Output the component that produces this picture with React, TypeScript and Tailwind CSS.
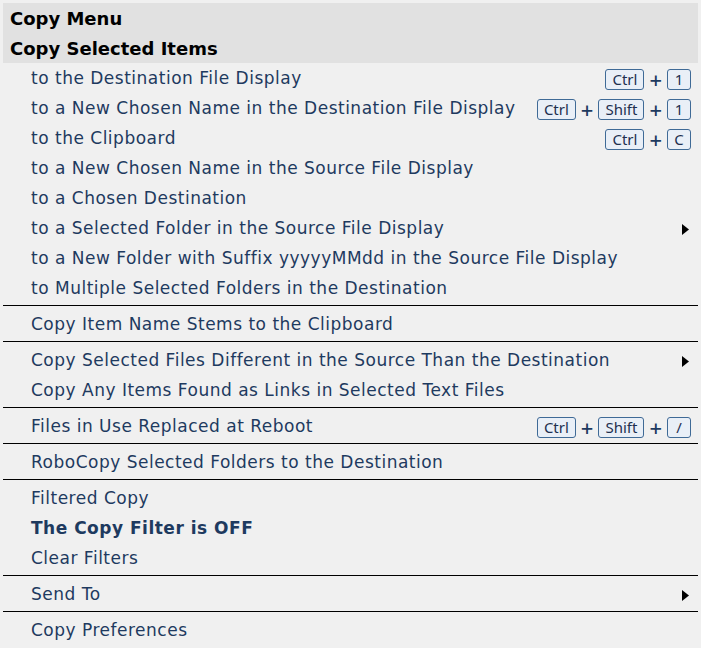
import React from 'react';

type Row =
  | { kind: 'item'; label: string; keys?: string[]; sub?: boolean; bold?: boolean }
  | { kind: 'sep' };

const rows: Row[] = [
  { kind: 'item', label: 'to the Destination File Display', keys: ['Ctrl', '1'] },
  { kind: 'item', label: 'to a New Chosen Name in the Destination File Display', keys: ['Ctrl', 'Shift', '1'] },
  { kind: 'item', label: 'to the Clipboard', keys: ['Ctrl', 'C'] },
  { kind: 'item', label: 'to a New Chosen Name in the Source File Display' },
  { kind: 'item', label: 'to a Chosen Destination' },
  { kind: 'item', label: 'to a Selected Folder in the Source File Display', sub: true },
  { kind: 'item', label: 'to a New Folder with Suffix yyyyyMMdd in the Source File Display' },
  { kind: 'item', label: 'to Multiple Selected Folders in the Destination' },
  { kind: 'sep' },
  { kind: 'item', label: 'Copy Item Name Stems to the Clipboard' },
  { kind: 'sep' },
  { kind: 'item', label: 'Copy Selected Files Different in the Source Than the Destination', sub: true },
  { kind: 'item', label: 'Copy Any Items Found as Links in Selected Text Files' },
  { kind: 'sep' },
  { kind: 'item', label: 'Files in Use Replaced at Reboot', keys: ['Ctrl', 'Shift', '/'] },
  { kind: 'sep' },
  { kind: 'item', label: 'RoboCopy Selected Folders to the Destination' },
  { kind: 'sep' },
  { kind: 'item', label: 'Filtered Copy' },
  { kind: 'item', label: 'The Copy Filter is OFF', bold: true },
  { kind: 'item', label: 'Clear Filters' },
  { kind: 'sep' },
  { kind: 'item', label: 'Send To', sub: true },
  { kind: 'sep' },
  { kind: 'item', label: 'Copy Preferences' },
];

function Keys({ keys }: { keys: string[] }) {
  return (
    <div className="flex items-center gap-[5px]">
      {keys.map((k, i) => (
        <React.Fragment key={i}>
          {i > 0 && <span className="text-[22px] leading-none font-medium text-[#1e3a5f] font-['Noto_Sans',sans-serif] tracking-normal">+</span>}
          <span className="h-[21px] min-w-[24px] px-[6px] flex items-center justify-center rounded-[3px] border border-[#3f6a96] bg-[#e9eff7] text-[15px] text-[#1e3050] font-['Noto_Sans',sans-serif] tracking-normal">
            {k}
          </span>
        </React.Fragment>
      ))}
    </div>
  );
}

export default function App() {
  return (
    <div className="w-[701px] h-[648px] bg-[#f0f0f0] p-[3px] font-['DejaVu_Sans',Verdana,sans-serif] overflow-hidden">
      <div className="bg-[#e1e1e1] pl-[7px]">
        <div className="h-[30px] flex items-center text-[18px] font-bold text-black">Copy Menu</div>
        <div className="h-[30px] flex items-center text-[18px] font-bold text-black">Copy Selected Items</div>
      </div>
      {rows.map((r, i) =>
        r.kind === 'sep' ? (
          <div key={i} className="mt-[2px] mb-[3px] h-px bg-black" />
        ) : (
          <div key={i} className="h-[30px] flex items-center pl-[28px] pr-[7px] pt-[2px] text-[17px] tracking-[0.5px] text-[#1e3a5f]">
            <span className={r.bold ? 'font-bold' : ''}>{r.label}</span>
            <div className="ml-auto flex items-center">
              {r.keys && <Keys keys={r.keys} />}
              {r.sub && (
                <svg width="7" height="11" viewBox="0 0 7 11" className="mr-[2px]">
                  <path d="M0 0 L7 5.5 L0 11 Z" fill="#000" />
                </svg>
              )}
            </div>
          </div>
        )
      )}
    </div>
  );
}
